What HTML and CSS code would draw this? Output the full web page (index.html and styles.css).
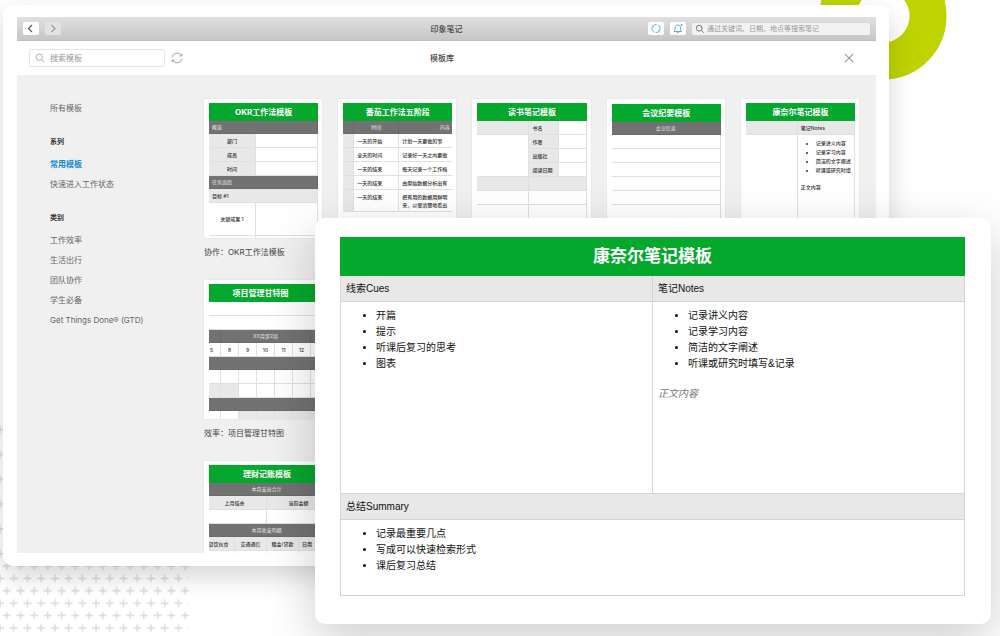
FILE: index.html
```
<!DOCTYPE html>
<html lang="zh-CN">
<head>
<meta charset="utf-8">
<title>印象笔记 模板库</title>
<link rel="stylesheet" href="styles.css">
</head>
<body>
<main class="stage">
  <svg class="ring" viewBox="0 0 128 80" aria-hidden="true"><circle cx="64" cy="16" r="45" fill="none" stroke="#bed300" stroke-width="37"/></svg>
  <svg class="plus-field" aria-hidden="true">
    <defs>
      <pattern id="plus" width="13.72" height="24.8" patternUnits="userSpaceOnUse">
        <path d="M2.7 6.2h8M6.7 2.2v8M-4 18.6h8M9.7 18.6h8M0 14.6v8M13.72 14.6v8" stroke="#d9d9d9" stroke-width="1.3" fill="none"/>
      </pattern>
    </defs>
    <rect width="189" height="223" fill="url(#plus)"/>
  </svg>

  <section class="window">
    <div class="app">
      <header class="titlebar">
        <div class="nav">
          <button class="tool" aria-label="后退"><svg viewBox="0 0 16 13"><path d="M9 3 5.500 6.500 9 10" stroke="#555" stroke-width="1.200"/></svg></button>
          <button class="tool tool-off" aria-label="前进"><svg viewBox="0 0 16 13"><path d="M6.500 3 10 6.500 6.500 10" stroke="#999" stroke-width="1.100"/></svg></button>
        </div>
        <h1 class="bar-title">印象笔记</h1>
        <div class="actions">
          <button class="tool" aria-label="同步"><svg viewBox="0 0 16 13"><path d="M6.300 10.200A4.100 4.100 0 0 1 5 3.800M9.700 2.800a4.100 4.100 0 0 1 1.300 6.400M5.500 3.300a4.100 4.100 0 0 1 3-.9M10.500 9.700a4.100 4.100 0 0 1-3 .9M4.300 2.800l.9 1-.2 1.200M11.700 10.200l-.9-1 .2-1.200" stroke="#5ba4f2" stroke-width=".9"/></svg></button>
          <button class="tool" aria-label="通知"><svg viewBox="0 0 16 13"><path d="M4 9.500h7.500c-.9-.8-.9-1.800-.9-3.500 0-1.900-1.200-3-2.900-3S5 4.100 5 6c0 1.700 0 2.700-1 3.500ZM6.700 9.700c.2 1.500 2 1.500 2.200 0M10.600 3h2M11.600 2v2" stroke="#4c9df0" stroke-width=".9"/></svg></button>
          <label class="note-search">
            <svg viewBox="0 0 10 10"><circle cx="4.200" cy="4.200" r="2.900" stroke="#777"/><path d="m6.300 6.300 2.500 2.500" stroke="#777"/></svg>
            <input type="text" aria-label="搜索笔记" placeholder="通过关键词、日期、地点等搜索笔记">
          </label>
        </div>
      </header>

      <div class="toolbar">
        <div class="find">
          <label class="template-search">
            <svg viewBox="0 0 10 10"><circle cx="4.200" cy="4.200" r="3.200" stroke="#999" stroke-width=".8"/><path d="m6.600 6.600 2.700 2.700" stroke="#999" stroke-width=".8"/></svg>
            <input type="text" aria-label="搜索模板" placeholder="搜索模板">
          </label>
          <button class="plain" aria-label="刷新"><svg viewBox="0 0 12 12"><path d="M1 5.400a5 5 0 0 1 9.400-1.600M11 6.600a5 5 0 0 1-9.400 1.600M10.800 1.700v2.300H8.500M1.200 10.300V8h2.300" stroke="#999" stroke-width=".9"/></svg></button>
        </div>
        <h2 class="bar-title">模板库</h2>
        <button class="plain close" aria-label="关闭"><svg viewBox="0 0 12 12"><path d="m1.800 1.800 8.400 8.400m0-8.400-8.400 8.400" stroke="#999" stroke-width="1.100"/></svg></button>
      </div>

      <div class="library">
        <nav class="sidebar">
          <a href="#">所有模板</a>
          <h3>系列</h3>
          <a href="#" class="current">常用模板</a>
          <a href="#">快速进入工作状态</a>
          <h3>类别</h3>
          <a href="#">工作效率</a>
          <a href="#">生活出行</a>
          <a href="#">团队协作</a>
          <a href="#">学生必备</a>
          <a href="#">Get Things Done® (GTD)</a>
        </nav>

        <div class="gallery">
          <figure class="first">
            <div class="thumb"><div class="clip"><div class="sheet">
              <h4>OKR工作法模板</h4>
              <table>
                <colgroup><col class="c47"><col></colgroup>
                <tr class="dark"><td colspan="2">概览</td></tr>
                <tr><td class="grey mid">部门</td><td></td></tr>
                <tr><td class="grey mid">成员</td><td></td></tr>
                <tr><td class="grey mid">时间</td><td></td></tr>
                <tr class="dark"><td colspan="2">任务追踪</td></tr>
                <tr class="grey"><td colspan="2">目标 #1</td></tr>
                <tr class="tall"><td class="mid">关键成果 1</td><td></td></tr>
                <tr><td></td><td></td></tr>
              </table>
            </div></div></div>
            <figcaption>协作：OKR工作法模板</figcaption>
          </figure>

          <figure>
            <div class="thumb"><div class="clip"><div class="sheet">
              <h4>番茄工作法五阶段</h4>
              <table class="w148">
                <colgroup><col class="c11"><col class="c45"><col></colgroup>
                <tr class="dark"><td></td><td class="mid">时间</td><td class="mid">内容</td></tr>
                <tr><td class="grey"></td><td>一天的开始</td><td>计划一天要做的事</td></tr>
                <tr><td class="grey"></td><td>全天的时间</td><td>记录好一天之内要做</td></tr>
                <tr><td class="grey"></td><td>一天的结束</td><td>每天记录一个工作档</td></tr>
                <tr><td class="grey"></td><td>一天的结束</td><td>由原始数据分析出有</td></tr>
                <tr class="top"><td class="grey"></td><td>一天的结束</td><td>把有用的数据用鲜明<br>来，以便清楚地看出</td></tr>
              </table>
            </div></div></div>
          </figure>

          <figure>
            <div class="thumb"><div class="clip"><div class="sheet">
              <h4>读书笔记模板</h4>
              <table>
                <colgroup><col class="c52"><col class="c30"><col></colgroup>
                <tr><td class="grey"></td><td class="grey">书名</td><td></td></tr>
                <tr><td rowspan="3"></td><td class="grey">作者</td><td></td></tr>
                <tr><td class="grey">出版社</td><td></td></tr>
                <tr><td class="grey">阅读日期</td><td></td></tr>
                <tr class="grey"><td></td><td colspan="2"></td></tr>
                <tr><td></td><td colspan="2"></td></tr>
                <tr><td></td><td colspan="2"></td></tr>
                <tr><td></td><td colspan="2"></td></tr>
              </table>
            </div></div></div>
          </figure>

          <figure>
            <div class="thumb lower"><div class="clip"><div class="sheet">
              <h4>会议纪要模板</h4>
              <table>
                <tr class="dark"><td class="mid">会议信息</td></tr>
                <tr><td></td></tr><tr><td></td></tr><tr><td></td></tr>
                <tr><td></td></tr><tr><td></td></tr><tr><td></td></tr>
              </table>
            </div></div></div>
          </figure>

          <figure>
            <div class="thumb"><div class="clip"><div class="sheet">
              <h4>康奈尔笔记模板</h4>
              <table>
                <colgroup><col class="c52"><col></colgroup>
                <tr class="grey"><td></td><td>笔记Notes</td></tr>
                <tr class="notes"><td></td><td>
                  <ul><li>记录讲义内容</li><li>记录学习内容</li><li>简洁的文字阐述</li><li>听课或研究时填</li></ul>
                  <p>正文内容</p>
                </td></tr>
              </table>
            </div></div></div>
          </figure>

          <figure class="first">
            <div class="thumb"><div class="clip"><div class="sheet shifted w115">
              <h4>项目管理甘特图</h4>
              <table>
                <colgroup><col class="c18"><col class="c18"><col class="c18"><col class="c18"><col class="c18"><col class="c18"><col></colgroup>
                <tr><td colspan="7"></td></tr>
                <tr><td colspan="7"></td></tr>
                <tr class="dark"><td></td><td class="mid" colspan="5">XX月第2周</td><td></td></tr>
                <tr class="days"><td>5</td><td>8</td><td>9</td><td>10</td><td>11</td><td>12</td><td></td></tr>
                <tr class="dark"><td colspan="7"></td></tr>
                <tr><td></td><td></td><td></td><td></td><td></td><td></td><td></td></tr>
                <tr><td class="grey"></td><td class="grey"></td><td></td><td></td><td></td><td></td><td></td></tr>
                <tr class="dark"><td colspan="7"></td></tr>
                <tr><td></td><td></td><td class="grey"></td><td class="grey"></td><td class="grey"></td><td class="grey"></td><td class="grey"></td></tr>
              </table>
            </div></div></div>
            <figcaption>效率：项目管理甘特图</figcaption>
          </figure>

          <figure class="first">
            <div class="thumb"><div class="clip"><div class="sheet shifted w128">
              <h4>理财记账模板</h4>
              <table>
                <colgroup><col class="c32"><col class="c32"><col class="c32"><col class="c32"></colgroup>
                <tr class="dark"><td class="mid" colspan="4">本月支出合计</td></tr>
                <tr class="grey"><td class="mid" colspan="2">上月结余</td><td class="mid" colspan="2">当前金额</td></tr>
                <tr><td colspan="2"></td><td colspan="2"></td></tr>
                <tr class="dark"><td class="mid" colspan="4">本月收支明细</td></tr>
                <tr class="grey"><td class="mid">餐饮伙食</td><td class="mid">交通通信</td><td class="mid">租金/贷款</td><td>日用</td></tr>
                <tr><td></td><td></td><td></td><td></td></tr>
              </table>
            </div></div></div>
          </figure>
        </div>
      </div>
    </div>
  </section>

  <section class="preview">
    <table class="cornell">
      <colgroup><col><col></colgroup>
      <thead><tr><th class="heading" colspan="2">康奈尔笔记模板</th></tr></thead>
      <tbody>
        <tr class="label"><td>线索Cues</td><td>笔记Notes</td></tr>
        <tr class="content">
          <td><ul><li>开篇</li><li>提示</li><li>听课后复习的思考</li><li>图表</li></ul></td>
          <td><ul><li>记录讲义内容</li><li>记录学习内容</li><li>简洁的文字阐述</li><li>听课或研究时填写&amp;记录</li></ul><p>正文内容</p></td>
        </tr>
        <tr class="label"><td colspan="2">总结Summary</td></tr>
        <tr class="summary"><td colspan="2"><ul><li>记录最重要几点</li><li>写成可以快速检索形式</li><li>课后复习总结</li></ul></td></tr>
      </tbody>
    </table>
  </section>
</main>
</body>
</html>
```

FILE: styles.css
```
* { box-sizing: border-box; }
body {
  margin: 0;
  background: #fff;
  font-family: Inter, "Noto Sans CJK SC", sans-serif;
  font-size: 8px;
  color: #555;
}
h1, h2, h3, h4, p, ul, figure { margin: 0; padding: 0; }
button { padding: 0; border: 0; background: none; font: inherit; }
input {
  flex: 1;
  min-width: 0;
  padding: 0;
  border: 0;
  outline: 0;
  background: none;
  font: inherit;
}
svg { display: block; fill: none; }
table { width: 100%; border-spacing: 0; table-layout: fixed; }

.stage {
  position: relative;
  min-height: 100vh;
  padding: 5px 111px 70px 3px;
  overflow: hidden;
}
.ring { position: absolute; top: 0; right: 53px; width: 128px; height: 80px; }
.plus-field { position: absolute; left: 0; top: 411px; width: 190px; height: 223px; }

/* application window */
.window {
  position: relative;
  padding: 12px 13px 13px 14px;
  border-radius: 10px;
  background: #fff;
  box-shadow: 0 10px 26px rgba(0, 0, 0, .17);
}
.titlebar {
  display: grid;
  grid-template-columns: 1fr auto 1fr;
  align-items: center;
  height: 24px;
  padding: 0 6px;
  border-bottom: 1px solid #bdbdbd;
  background: linear-gradient(#e0e0e0, #c6c6c6);
}
.nav, .actions, .find { display: flex; align-items: center; gap: 6px; }
.actions { justify-content: flex-end; }
.tool { width: 16px; height: 13px; border-radius: 2px; background: #fff; }
.tool svg { width: 16px; height: 13px; }
.tool-off { background: #e2e2e2; }
.bar-title { font-size: 8px; font-weight: 500; line-height: 12px; color: #444; }
.note-search {
  display: flex;
  align-items: center;
  gap: 2px;
  width: 178px;
  height: 12px;
  padding: 0 3px;
  border-radius: 2px;
  background: #f2f2f2;
  font-size: 7px;
}
.note-search svg { width: 10px; height: 10px; }
.note-search input::placeholder { color: #999; }

.toolbar {
  display: grid;
  grid-template-columns: 1fr auto 1fr;
  align-items: center;
  height: 34px;
  padding: 0 21px 0 12px;
  background: #fff;
}
.template-search {
  display: flex;
  align-items: center;
  gap: 5px;
  width: 136px;
  height: 18px;
  padding: 0 5px;
  border: 1px solid #e6e6e6;
  border-radius: 2px;
}
.template-search svg { width: 10px; height: 10px; }
.template-search input::placeholder { color: #999; }
.plain svg { width: 12px; height: 12px; }
.close { justify-self: end; }

.library {
  display: flex;
  height: 478px;
  overflow: hidden;
  background: #f0f0f0;
}
.sidebar {
  display: flex;
  flex-direction: column;
  flex: 0 0 187px;
  padding: 23px 0 0 33px;
  line-height: 20px;
}
.sidebar a { color: #666; text-decoration: none; }
.sidebar h3 { margin: 14px 0 2px; font-size: 7px; font-weight: 700; color: #333; }
.sidebar .current { font-weight: 700; color: #158bcf; }

.gallery {
  flex: 1;
  display: grid;
  grid-template-columns: repeat(5, minmax(0, 1fr));
  grid-auto-rows: 165px;
  gap: 16px;
  padding: 24px 17px 0 0;
}
.first { grid-column: 1; }
.thumb {
  height: 139px;
  padding: 4px 4px 0 5px;
  background: #fff;
  box-shadow: 0 0 1px rgba(0, 0, 0, .15);
}
.lower { padding-top: 5px; }
.clip { height: 100%; overflow: hidden; }
figcaption { line-height: 28px; color: #444; }

/* miniature sheets */
.sheet { font-size: 5px; line-height: 8px; color: #333; font-weight: 500; }
.shifted { margin-left: -6px; }
.w115 { width: 115px; }
.w128 { width: 128px; }
.w148 { width: 148px; }
.sheet h4 {
  background: #04a82d;
  color: #fff;
  font-size: 8px;
  font-weight: 700;
  line-height: 18px;
  text-align: center;
}
.sheet td {
  height: 14px;
  padding: 0 3px;
  border: 0 solid #e0e0e0;
  border-width: 0 1px 1px 0;
  white-space: nowrap;
}
.sheet .grey, .sheet .grey td { background: #e8e8e8; }
.sheet .dark td {
  height: 13px;
  border-color: #6a6a6a;
  background: #727272;
  color: #e6e6e6;
  font-weight: 400;
}
.sheet .mid, .sheet .days td { text-align: center; }
.sheet .days td { padding: 0; }
.sheet .tall td { height: 33px; }
.sheet .top td { height: 22px; padding-top: 3px; vertical-align: top; }
.sheet .notes td { height: 110px; padding-top: 4px; vertical-align: top; }
.sheet ul { padding-left: 15px; line-height: 9px; }
.sheet p { padding-top: 8px; line-height: 9px; }
.c11 { width: 11px; }
.c18 { width: 18px; }
.c30 { width: 30px; }
.c32 { width: 32px; }
.c45 { width: 45px; }
.c47 { width: 47px; }
.c52 { width: 52px; }

/* enlarged note laid over the window */
.preview {
  position: absolute;
  left: 315px;
  right: 9px;
  top: 218px;
  padding: 19px 26px 28px 25px;
  border-radius: 10px;
  background: #fff;
  box-shadow: 0 16px 50px rgba(0, 0, 0, .2);
}
.cornell {
  border-collapse: collapse;
  font: 10px/16px "Liberation Sans", "Noto Sans CJK SC", sans-serif;
  color: #111;
}
.cornell td { padding: 0 5px; border: 1px solid #d4d4d4; }
.cornell .heading {
  height: 38px;
  padding: 0;
  border: 1px solid #04a82d;
  background: #04a82d;
  color: #fff;
  font-size: 17px;
  font-weight: 700;
  line-height: 24px;
}
.cornell .label td { height: 26px; background: #e8e8e8; }
.cornell .content td { height: 192px; padding-top: 6px; vertical-align: top; }
.cornell .summary td { height: 76px; padding-top: 6px; vertical-align: top; }
.cornell ul { padding-left: 30px; }
.cornell p { padding-top: 14px; color: #777; font-style: italic; }
```
